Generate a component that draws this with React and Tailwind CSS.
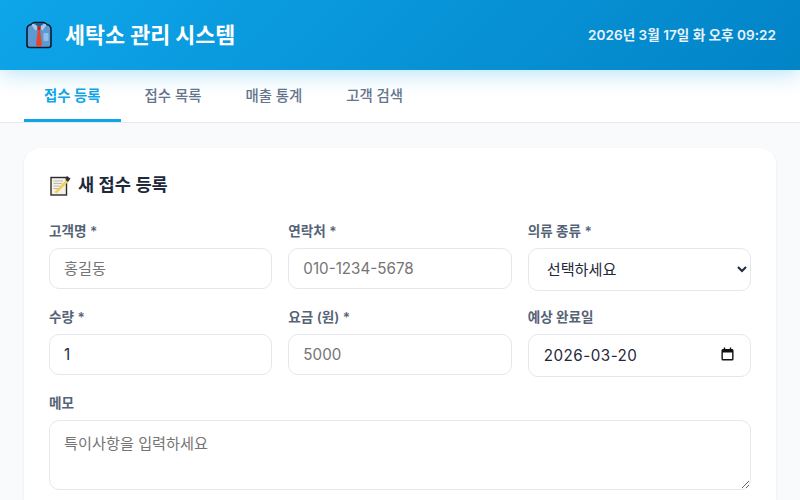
import React from 'react';

const FONT = "font-['Inter','Noto_Sans_CJK_KR',sans-serif]";

const TABS = ['접수 등록', '접수 목록', '매출 통계', '고객 검색'];

const fieldClass =
  "w-full rounded-[10px] border border-[#e5e7eb] bg-white px-[14px] py-[10px] text-[15.2px] leading-[normal] text-[#1e293b] placeholder:text-[#757575] font-['Inter','Noto_Sans_CJK_KR',sans-serif]";

// 👔 drawn by hand, no emoji font in the sandbox
const ShirtIcon = () => (
  <svg width="28" height="28" viewBox="0 0 28 28" className="shrink-0">
    <path d="M7 3.5 L10 1.5 H20 L23 3.5 Q27 4.5 27 8 V24 Q27 26.5 24.5 26.5 H5.5 Q3 26.5 3 24 V8 Q3 4.5 7 3.5Z" fill="#5b9bd5" stroke="#0b1b2b" strokeWidth="1.6" />
    <path d="M10 2 H20 L15 6.5Z" fill="#1f5f99" />
    <path d="M9 2.5 L15 6.5 L11.5 9.5 L7.5 4Z M21 2.5 L15 6.5 L18.5 9.5 L22.5 4Z" fill="#a6cdee" />
    <path d="M13.2 5.5 H16.8 L16.2 9 L18 24 L15 26 L12 24 L13.8 9Z" fill="#e8442a" />
    <path d="M13.2 5.5 H16.8 L16.2 9 H13.8Z" fill="#b3261e" />
    <rect x="19.5" y="12" width="5" height="8" rx="1" fill="#8fc0e8" />
  </svg>
);

// 📝 memo with pencil
const MemoIcon = () => (
  <svg width="21" height="21" viewBox="0 0 21 21" className="shrink-0">
    <rect x="1" y="2.5" width="15.5" height="17.5" fill="#f4f1e6" stroke="#2b2b2b" strokeWidth="1.4" />
    <path d="M3.5 6 H13 M3.5 8.5 H12 M3.5 11 H10 M3.5 13.5 H8" stroke="#b8b8b0" strokeWidth="1" />
    <path d="M4.5 17 L16 5 L18 7 L6.5 18.5 Z" fill="#f2cf5b" />
    <path d="M15.5 3 L17 1 L20.5 3.5 L18 7 L16 5Z" fill="#333333" />
  </svg>
);

// same drawing as the browser's date picker indicator
const DatePickerIcon = () => (
  <svg width="13" height="14" viewBox="0 0 14 14" preserveAspectRatio="none" className="absolute top-[13px] right-[17px]">
    <path d="M3 0.5 H4.5 V2 H9.5 V0.5 H11 V2 H12 Q13.5 2 13.5 3.5 V12 Q13.5 13.5 12 13.5 H2 Q0.5 13.5 0.5 12 V3.5 Q0.5 2 2 2 H3Z M2 5.5 V12 H12 V5.5Z" fill="#111111" fillRule="evenodd" />
  </svg>
);

const Label = ({ children }) => (
  <label className="mb-[7px] block text-[13.6px] leading-[20px] font-semibold text-[#566376]">{children}</label>
);

const App = () => {
  return (
    <div className={`h-[500px] w-[800px] overflow-hidden bg-[#f8fafc] ${FONT}`}>
      {/* Header */}
      <header className="relative z-10 flex h-[70px] items-center justify-between bg-[linear-gradient(135deg,#0ea5e9,#0284c7)] px-[24px] text-white shadow-[0_4px_20px_rgba(14,165,233,0.3)]">
        <div className="flex items-center gap-[13px]">
          <ShirtIcon />
          <h1 className="text-[21.76px] font-bold">세탁소 관리 시스템</h1>
        </div>
        <div className="text-[13.6px] font-semibold opacity-90">2026년 3월 17일 화 오후 09:22</div>
      </header>

      {/* Tabs */}
      <nav className="flex h-[53px] gap-[4px] border-b border-[#e5e7eb] bg-white px-[24px]">
        {TABS.map((tab, i) => (
          <button
            key={tab}
            className={`h-[52px] border-b-[3px] px-[20px] pt-[2px] text-[14.4px] font-medium ${
              i === 0 ? 'border-[#0ea5e9] text-[#0ea5e9] font-semibold' : 'border-transparent text-[#64748b]'
            }`}
          >
            {tab}
          </button>
        ))}
      </nav>

      {/* Form card */}
      <main className="px-[24px] pt-[25px]">
        <section className="rounded-[16px] bg-white p-[25px] shadow-[0_1px_3px_rgba(0,0,0,0.08)]">
          <h2 className="mb-[24px] flex items-center gap-[7px] pl-[1px] text-[17.6px] leading-[24px] font-semibold text-[#1e293b]">
            <MemoIcon />새 접수 등록
          </h2>

          <div className="grid grid-cols-3 items-start gap-x-[16px] gap-y-[16px]">
            <div>
              <Label>고객명 *</Label>
              <input className={fieldClass} placeholder="홍길동" />
            </div>
            <div>
              <Label>연락처 *</Label>
              <input className={fieldClass} placeholder="010-1234-5678" />
            </div>
            <div>
              <Label>의류 종류 *</Label>
              <select className={`${fieldClass} h-[43px]`} defaultValue="">
                <option value="">선택하세요</option>
              </select>
            </div>
            <div>
              <Label>수량 *</Label>
              <input type="number" className={fieldClass} defaultValue="1" />
            </div>
            <div>
              <Label>요금 (원) *</Label>
              <input type="number" className={fieldClass} placeholder="5000" />
            </div>
            <div>
              <Label>예상 완료일</Label>
              {/* text input: the browser's date field would print the en-US order */}
              <div className="relative">
                <input className={`${fieldClass} h-[43px] pl-[15px] tracking-[0.5px]`} defaultValue="2026-03-20" />
                <DatePickerIcon />
              </div>
            </div>
            <div className="col-span-3">
              <Label>메모</Label>
              <textarea className={`${fieldClass} block h-[70px]`} placeholder="특이사항을 입력하세요" />
            </div>
          </div>
        </section>
      </main>
    </div>
  );
};

export default App;
